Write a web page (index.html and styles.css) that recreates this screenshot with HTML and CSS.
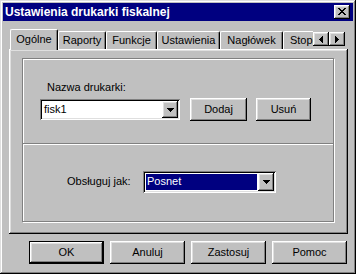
FILE: index.html
```html
<!DOCTYPE html>
<html lang="pl">
<head>
<meta charset="utf-8">
<title>Ustawienia drukarki fiskalnej</title>
<link rel="stylesheet" href="styles.css">
</head>
<body>
<div class="window">
  <div class="titlebar">
    <span class="title">Ustawienia drukarki fiskalnej</span>
    <button class="close raised" aria-label="Zamknij">
      <svg width="8" height="7" viewBox="0 0 8 7"><path d="M0 0h2v1h1v1h2V1h1V0h2v1H7v1H6v1H5v1h1v1h1v1h1v1H6V6H5V5H3v1H2v1H0V6h1V5h1V4h1V3H2V2H1V1H0z" fill="#000"/></svg>
    </button>
  </div>

  <div class="tabstrip">
    <div class="tabs">
      <div class="tab selected tab-w48">Ogólne</div>
      <div class="tab tab-w48">Raporty</div>
      <div class="tab tab-w51">Funkcje</div>
      <div class="tab tab-w63">Ustawienia</div>
      <div class="tab tab-w63">Nagłówek</div>
      <div class="tab tab-w48">Stopka</div>
    </div>
    <div class="scroller">
      <button class="arrow raised" aria-label="W lewo"><svg width="4" height="7" viewBox="0 0 4 7"><path d="M3 0h1v7H3V6H2V5H1V4H0V3h1V2h1V1h1z" fill="#000"/></svg></button>
      <button class="arrow raised" aria-label="W prawo"><svg width="4" height="7" viewBox="0 0 4 7"><path d="M0 0h1v1h1v1h1v1h1v1H3v1H2v1H1v1H0z" fill="#000"/></svg></button>
    </div>
  </div>

  <div class="panel">
    <div class="groups">
      <div class="group group-name">
        <div class="label">Nazwa drukarki:</div>
        <div class="row">
          <div class="combo combo-name sunken">
            <div class="value">fisk1</div>
            <div class="drop raised"><svg width="7" height="4" viewBox="0 0 7 4"><path d="M0 0h7v1H6v1H5v1H4v1H3V3H2V2H1V1H0z" fill="#000"/></svg></div>
          </div>
          <button class="btn btn-add raised">Dodaj</button>
          <button class="btn btn-del raised">Usuń</button>
        </div>
      </div>
      <div class="separator"></div>
      <div class="group group-mode">
        <div class="label label-mode">Obsługuj jak:</div>
        <div class="combo combo-mode sunken">
          <div class="value selected-value">Posnet</div>
          <div class="drop raised"><svg width="7" height="4" viewBox="0 0 7 4"><path d="M0 0h7v1H6v1H5v1H4v1H3V3H2V2H1V1H0z" fill="#000"/></svg></div>
        </div>
      </div>
    </div>
  </div>

  <div class="buttons">
    <button class="btn btn-main default"><span class="raised inner">OK</span></button>
    <button class="btn btn-main raised">Anuluj</button>
    <button class="btn btn-main raised">Zastosuj</button>
    <button class="btn btn-main raised">Pomoc</button>
  </div>
</div>
</body>
</html>
```

FILE: styles.css
```css
* { box-sizing: border-box; }

html, body {
  margin: 0;
  padding: 0;
  background: #c0c0c0;
}

body {
  font-family: "Liberation Sans", Arial, sans-serif;
  font-size: 11px;
  color: #000;
}

button {
  font: inherit;
  color: inherit;
  border: 0;
  padding: 0;
  margin: 0;
  background: #c0c0c0;
  cursor: default;
}

.raised {
  background: #c0c0c0;
  box-shadow: inset -1px -1px #000, inset 1px 1px #fff, inset -2px -2px #808080, inset 2px 2px #dfdfdf;
}

.sunken {
  box-shadow: inset 1px 1px #808080, inset -1px -1px #fff, inset 2px 2px #000, inset -2px -2px #dfdfdf;
}

.window {
  width: 356px;
  height: 274px;
  padding: 3px;
  background: #c0c0c0;
  box-shadow: inset -1px -1px #000, inset 1px 1px #dfdfdf, inset -2px -2px #808080, inset 2px 2px #fff;
  display: flex;
  flex-direction: column;
}

.titlebar {
  height: 18px;
  background: #000080;
  display: flex;
  align-items: center;
  justify-content: space-between;
  padding: 0 3px 0 2px;
}

.title {
  color: #fff;
  font-weight: bold;
  font-size: 12px;
  line-height: 14px;
}

.close {
  width: 16px;
  height: 14px;
  display: flex;
  align-items: center;
  justify-content: center;
  padding-bottom: 1px;
}

.close svg { display: block; }

.tabstrip {
  margin: 8px 5px 0 6px;
  height: 20px;
  display: flex;
  position: relative;
  z-index: 2;
}

.tabs {
  width: 304px;
  height: 21px;
  overflow: hidden;
  display: flex;
  align-items: flex-end;
  padding-left: 1px;
  white-space: nowrap;
}

.tab {
  flex: none;
  height: 18px;
  padding: 2px 0 0 0;
  text-align: center;
  line-height: 13px;
  border-top: 1px solid #fff;
  border-left: 1px solid #fff;
  border-right: 1px solid #000;
  border-top-left-radius: 2px;
  border-top-right-radius: 2px;
  box-shadow: inset -1px 0 #808080;
  margin-bottom: 1px;
}

.tab-w48 { width: 48px; }
.tab-w51 { width: 51px; }
.tab-w63 { width: 63px; }

.tab.selected {
  height: 21px;
  margin-bottom: 0;
  padding-top: 3px;
  position: relative;
  z-index: 3;
  background: #c0c0c0;
}

.scroller {
  display: flex;
  margin-top: 3px;
}

.arrow {
  width: 16px;
  height: 14px;
  display: flex;
  align-items: center;
  justify-content: center;
}

.arrow svg { display: block; }

.panel {
  margin: 0 5px 0 6px;
  height: 185px;
  padding: 9px 0 0 13px;
  box-shadow: inset -1px -1px #000, inset 1px 1px #fff, inset -2px -2px #808080, inset 2px 2px #dfdfdf;
  position: relative;
  z-index: 1;
}

.groups {
  width: 312px;
  height: 164px;
  border: 1px solid #808080;
  box-shadow: 1px 1px 0 #fff, inset 1px 1px 0 #fff;
  display: flex;
  flex-direction: column;
}

.group-name {
  height: 84px;
  padding: 22px 0 0 0;
}

.label {
  line-height: 13px;
  padding-left: 24px;
}

.row {
  display: flex;
  align-items: center;
  height: 23px;
  margin-top: 4px;
  padding-left: 17px;
}

.separator {
  height: 2px;
  border-top: 1px solid #808080;
  border-bottom: 1px solid #fff;
}

.group-mode {
  flex: 1;
  display: flex;
  align-items: flex-start;
  padding: 26px 0 0 44px;
}

.label-mode {
  padding-left: 0;
  width: 76px;
  flex: none;
  margin-top: 4px;
}

.combo {
  height: 21px;
  background: #fff;
  padding: 2px;
  display: flex;
}

.combo-name { width: 140px; }
.combo-mode { width: 133px; height: 22px; }

.value {
  flex: 1;
  line-height: 17px;
  padding-left: 2px;
}

.selected-value {
  margin: 1px;
  line-height: 15px;
  padding-left: 1px;
  background: #000080;
  color: #fff;
}

.drop {
  width: 16px;
  flex: none;
  display: flex;
  align-items: center;
  justify-content: center;
}

.drop svg { display: block; }

.btn {
  height: 23px;
  text-align: center;
  line-height: 23px;
}

.btn-add { width: 57px; margin-left: 10px; }
.btn-del { width: 55px; margin-left: 9px; }

.buttons {
  display: flex;
  gap: 6px;
  margin: 7px 0 0 26px;
}

.btn-main { width: 75px; }

.default {
  border: 1px solid #000;
  padding: 0;
  background: #c0c0c0;
  display: flex;
}

.default .inner {
  flex: 1;
  display: block;
  line-height: 21px;
}
```
